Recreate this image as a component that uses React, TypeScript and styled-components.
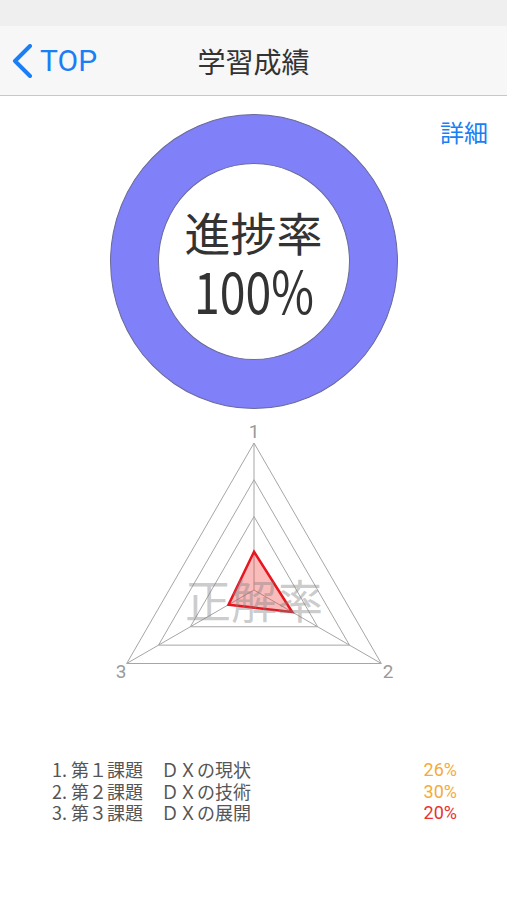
import { FC } from 'react'
import styled, { createGlobalStyle } from 'styled-components'

const GlobalStyle = createGlobalStyle`
  html, body {
    margin: 0;
    padding: 0;
    background: #ffffff;
  }

  body {
    font-family: 'Noto Sans CJK JP', 'Noto Sans', sans-serif;
    color: #333333;
  }
`

interface Subject {
  no: number
  title: string
  rate: number
  color: string
}

const subjects: Subject[] = [
  { no: 1, title: '第１課題　ＤＸの現状', rate: 26, color: '#f5aa3c' },
  { no: 2, title: '第２課題　ＤＸの技術', rate: 30, color: '#f5aa3c' },
  { no: 3, title: '第３課題　ＤＸの展開', rate: 20, color: '#e8322f' },
]

const CX = 254
const CY = 170
const R = 147
const LEVELS = [1, 0.75, 0.5]

// axis angles: 1 = top, 2 = bottom right, 3 = bottom left
const ANGLES = [-90, 30, 150].map((a) => (a * Math.PI) / 180)

const point = (ratio: number, i: number) =>
  `${CX + Math.cos(ANGLES[i]) * R * ratio},${CY + Math.sin(ANGLES[i]) * R * ratio}`

const RadarChart: FC<{ values: number[] }> = ({ values }) => {
  const dataPoints = values.map((v, i) => point(v / 100, i)).join(' ')

  return (
    <RadarSvg viewBox="0 0 507 270" width={507} height={270}>
      {LEVELS.map((lv) => (
        <polygon
          key={lv}
          points={[0, 1, 2].map((i) => point(lv, i)).join(' ')}
          fill="none"
          stroke="#a6a6a6"
          strokeWidth={1}
        />
      ))}
      {[0, 1, 2].map((i) => (
        <line
          key={i}
          x1={CX}
          y1={CY}
          x2={CX + Math.cos(ANGLES[i]) * R}
          y2={CY + Math.sin(ANGLES[i]) * R}
          stroke="#a6a6a6"
          strokeWidth={1}
        />
      ))}
      <polygon
        points={dataPoints}
        fill="rgba(240, 60, 60, 0.35)"
        stroke="#e8141e"
        strokeWidth={2.5}
      />
      <AxisLabel x={254} y={11} textAnchor="middle">
        1
      </AxisLabel>
      <AxisLabel x={388} y={251} textAnchor="middle">
        2
      </AxisLabel>
      <AxisLabel x={121} y={251} textAnchor="middle">
        3
      </AxisLabel>
      <Watermark x={254} y={178} textAnchor="middle">
        正解率
      </Watermark>
    </RadarSvg>
  )
}

const App: FC = () => {
  return (
    <>
      <GlobalStyle />
      <Screen>
        <StatusBar />
        <NavBar>
          <BackButton>
            <svg width="22" height="34" viewBox="0 0 22 34">
              <polyline
                points="18,2 3,17 18,32"
                fill="none"
                stroke="#1a7ff5"
                strokeWidth="4"
                strokeLinecap="round"
                strokeLinejoin="round"
              />
            </svg>
            <BackText>TOP</BackText>
          </BackButton>
          <NavTitle>学習成績</NavTitle>
          <span />
        </NavBar>

        <Content>
          <TopRow>
            <span />
            <Donut>
              <DonutHole>
                <ProgressLabel>進捗率</ProgressLabel>
                <ProgressValue>100%</ProgressValue>
              </DonutHole>
            </Donut>
            <DetailLink>詳細</DetailLink>
          </TopRow>

          <RadarChart values={subjects.map((s) => s.rate)} />

          <SubjectList>
            {subjects.map((s) => (
              <SubjectRow key={s.no}>
                <SubjectName>{`${s.no}. ${s.title}`}</SubjectName>
                <SubjectRate $color={s.color}>{`${s.rate}%`}</SubjectRate>
              </SubjectRow>
            ))}
          </SubjectList>
        </Content>
      </Screen>
    </>
  )
}

export default App

const Screen = styled.div`
  width: 507px;
  min-height: 900px;
  background: #ffffff;
`

const StatusBar = styled.div`
  height: 26px;
  background: #efefef;
`

const NavBar = styled.header`
  height: 70px;
  box-sizing: border-box;
  background: #f7f7f7;
  border-bottom: 1.5px solid #c8c8c8;

  display: grid;
  grid-template-columns: 1fr auto 1fr;
  align-items: center;
`

const BackButton = styled.button`
  display: flex;
  align-items: center;
  gap: 6px;
  padding: 0 0 0 12px;
  margin: 0;
  border: none;
  background: none;
  justify-self: start;
`

const BackText = styled.span`
  font-family: Roboto, 'Liberation Sans', sans-serif;
  font-size: 30px;
  line-height: 36px;
  color: #1a7ff5;
`

const NavTitle = styled.h1`
  margin: 0;
  font-size: 28px;
  font-weight: 400;
  line-height: 36px;
  color: #333333;
`

const Content = styled.main`
  padding-top: 18px;
`

const TopRow = styled.div`
  display: grid;
  grid-template-columns: 1fr 288px 1fr;
`

const Donut = styled.div`
  width: 288px;
  height: 295px;
  box-sizing: border-box;
  border-radius: 50%;
  background: #8080f8;
  border: 1px solid #6a6a9a;

  display: flex;
  justify-content: center;
  align-items: center;
`

const DonutHole = styled.div`
  width: 192px;
  height: 197px;
  box-sizing: border-box;
  border-radius: 50%;
  background: #ffffff;
  border: 1px solid #6a6a9a;

  display: flex;
  flex-direction: column;
  justify-content: center;
  align-items: center;
  gap: 4px;
`

const ProgressLabel = styled.div`
  font-size: 46px;
  line-height: 50px;
  color: #333333;
`

const ProgressValue = styled.div`
  font-size: 58px;
  line-height: 58px;
  color: #333333;
  transform: scaleX(0.8);
`

const DetailLink = styled.a`
  justify-self: end;
  align-self: start;
  margin: 3px 19px 0 0;
  font-size: 24px;
  line-height: 30px;
  color: #1a7ff5;
`

const RadarSvg = styled.svg`
  display: block;
  margin-top: 11px;
`

const AxisLabel = styled.text`
  font-family: Roboto, 'Liberation Sans', sans-serif;
  font-size: 19px;
  fill: #9a9a9a;
  dominant-baseline: central;
`

const Watermark = styled.text`
  font-family: 'Noto Sans CJK JP', sans-serif;
  font-size: 46px;
  fill: rgba(130, 130, 130, 0.42);
  dominant-baseline: central;
`

const SubjectList = styled.ul`
  list-style: none;
  margin: 69px 0 0;
  padding: 0 50px 0 52px;
`

const SubjectRow = styled.li`
  display: flex;
  justify-content: space-between;
  align-items: center;
  height: 21.5px;
`

const SubjectName = styled.span`
  font-size: 18px;
  line-height: 21px;
  color: #555555;
  white-space: pre;
`

const SubjectRate = styled.span<{ $color: string }>`
  font-family: Roboto, 'Liberation Sans', sans-serif;
  font-size: 18px;
  line-height: 21px;
  color: ${({ $color }) => $color};
`
